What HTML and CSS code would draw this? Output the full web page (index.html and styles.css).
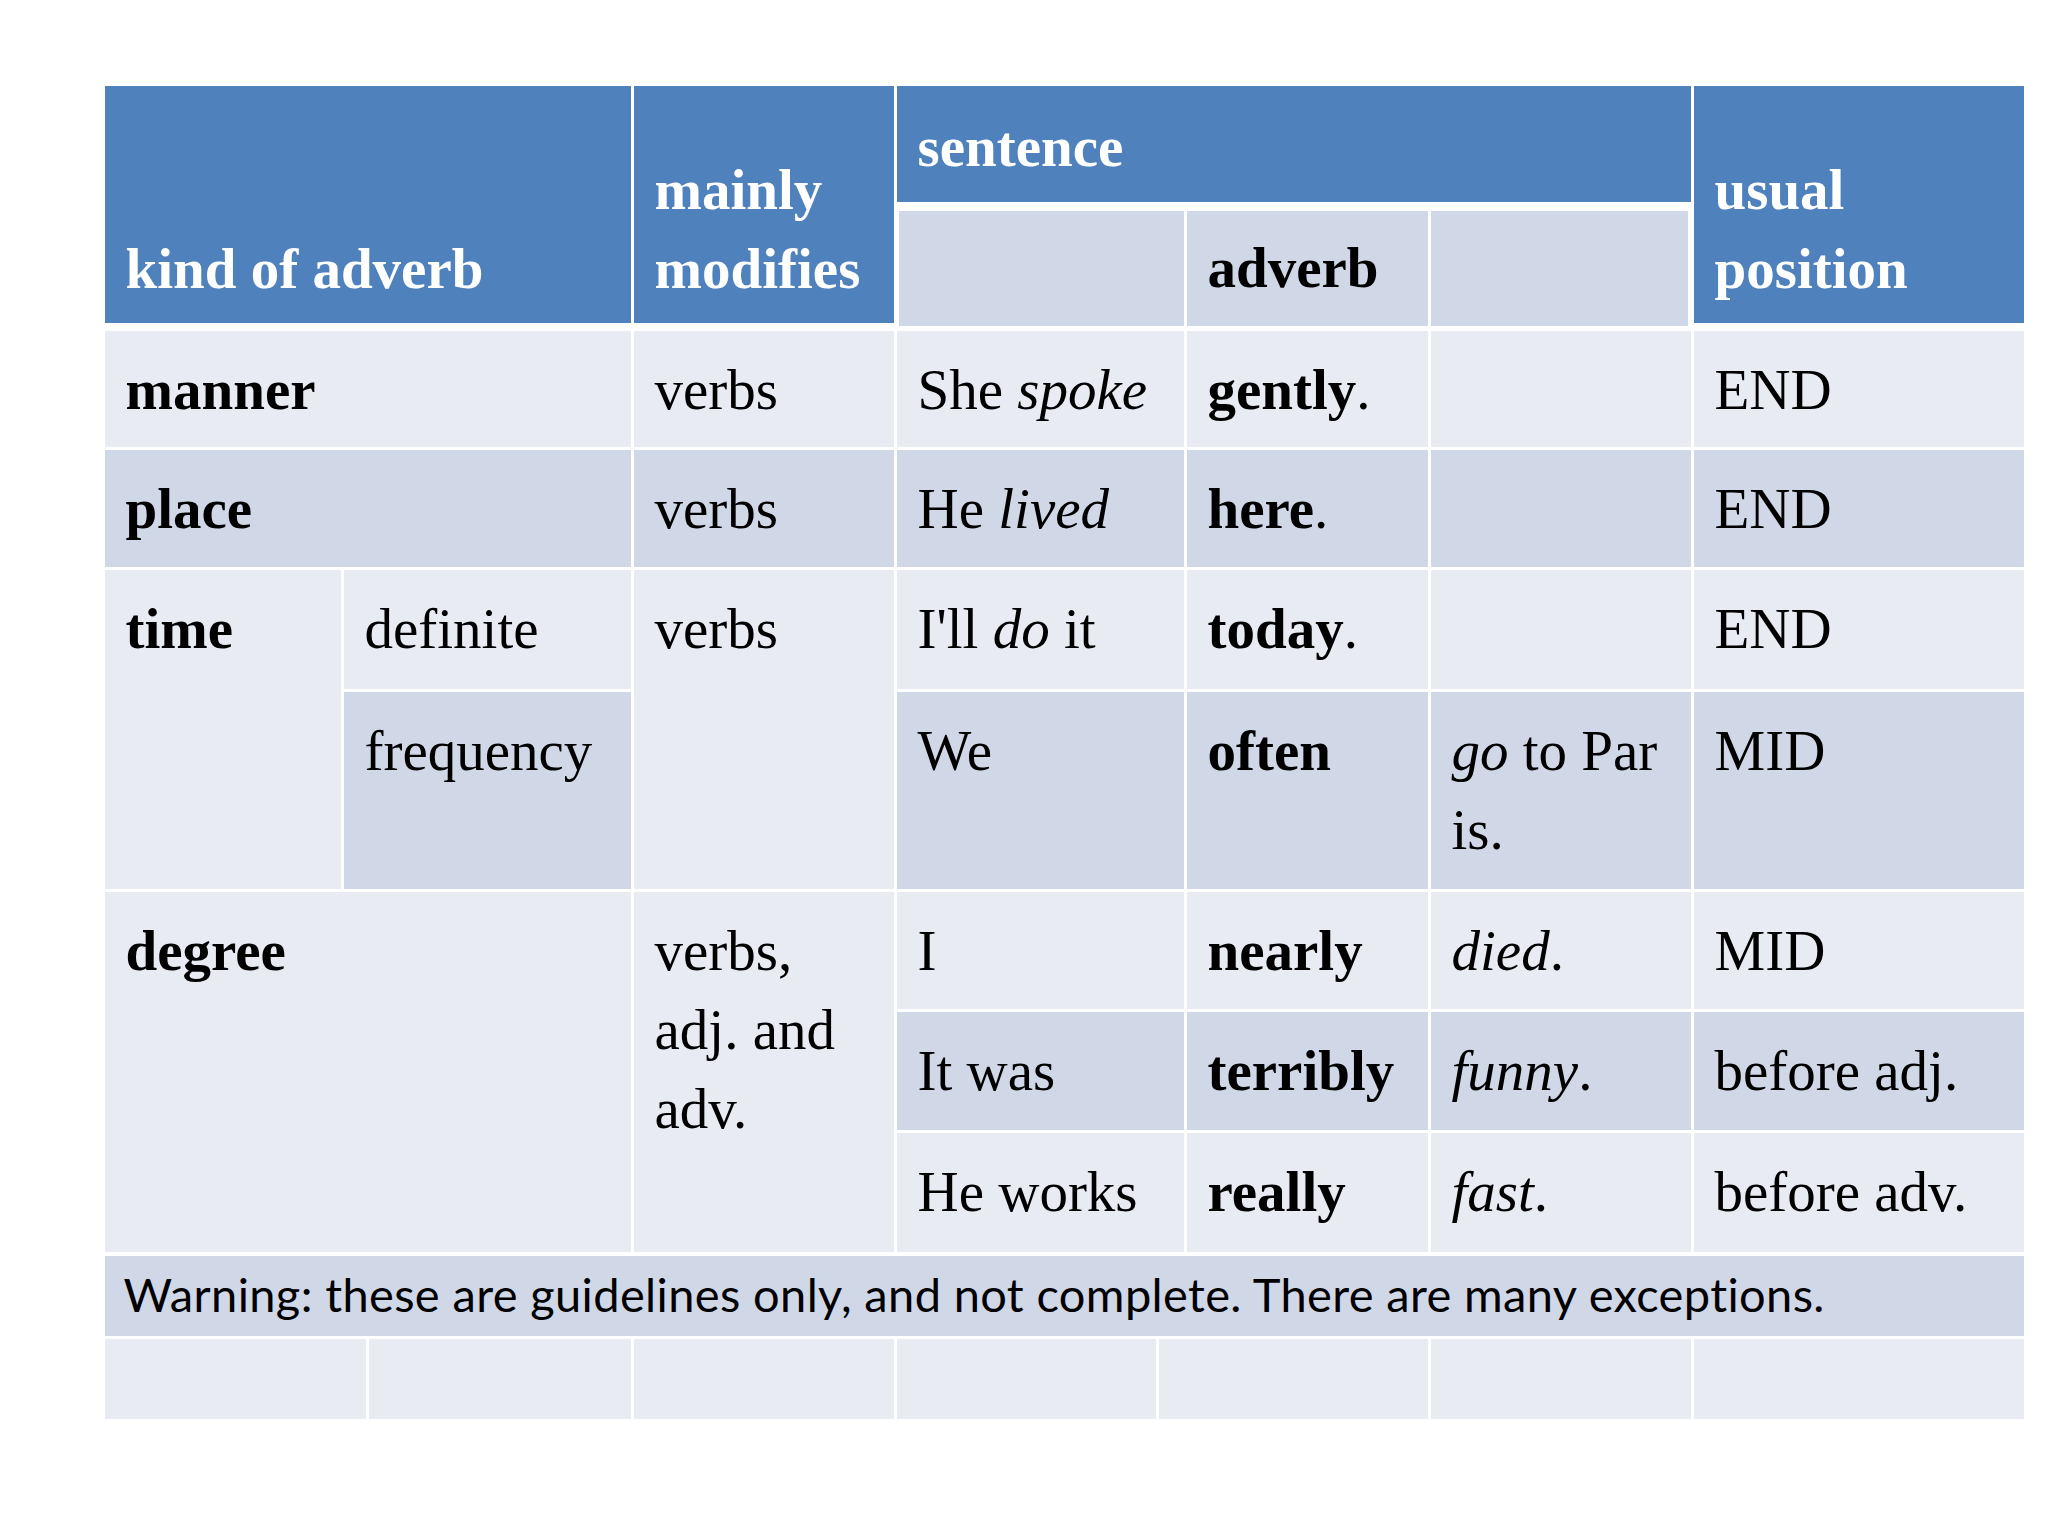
FILE: index.html
```html
<!DOCTYPE html>
<html lang="en">
<head>
<meta charset="utf-8">
<title>Kinds of adverb</title>
<link rel="stylesheet" href="styles.css">
</head>
<body>
<div class="slide">
  <div class="table">
    <div class="grid head">
      <div class="hd cs2 rs2">kind of adverb</div>
      <div class="hd rs2">mainly<br>modifies</div>
      <div class="hd top cs3">sentence</div>
      <div class="hd rs2">usual<br>position</div>
      <div class="sub first"></div>
      <div class="sub"><b>adverb</b></div>
      <div class="sub last"></div>
    </div>

    <div class="grid body">
      <div class="cell light cs2"><b>manner</b></div>
      <div class="cell light">verbs</div>
      <div class="cell light">She <i>spoke</i></div>
      <div class="cell light"><b>gently</b>.</div>
      <div class="cell light"></div>
      <div class="cell light">END</div>

      <div class="cell dark cs2"><b>place</b></div>
      <div class="cell dark">verbs</div>
      <div class="cell dark">He <i>lived</i></div>
      <div class="cell dark"><b>here</b>.</div>
      <div class="cell dark"></div>
      <div class="cell dark">END</div>

      <div class="cell light rs2"><b>time</b></div>
      <div class="cell light">definite</div>
      <div class="cell light rs2">verbs</div>
      <div class="cell light">I'll <i>do</i> it</div>
      <div class="cell light"><b>today</b>.</div>
      <div class="cell light"></div>
      <div class="cell light">END</div>

      <div class="cell dark">frequency</div>
      <div class="cell dark">We</div>
      <div class="cell dark"><b>often</b></div>
      <div class="cell dark"><i>go</i> to Par<br>is.</div>
      <div class="cell dark">MID</div>

      <div class="cell light cs2 rs3"><b>degree</b></div>
      <div class="cell light rs3">verbs,<br>adj. and<br>adv.</div>
      <div class="cell light">I</div>
      <div class="cell light"><b>nearly</b></div>
      <div class="cell light"><i>died</i>.</div>
      <div class="cell light">MID</div>

      <div class="cell dark">It was</div>
      <div class="cell dark"><b>terribly</b></div>
      <div class="cell dark"><i>funny</i>.</div>
      <div class="cell dark">before adj.</div>

      <div class="cell light">He works</div>
      <div class="cell light"><b>really</b></div>
      <div class="cell light"><i>fast</i>.</div>
      <div class="cell light">before adv.</div>
    </div>

    <div class="warn dark">Warning: these are guidelines only, and not complete. There are many exceptions.</div>

    <div class="grid foot">
      <div class="light"></div>
      <div class="light"></div>
      <div class="light"></div>
      <div class="light"></div>
      <div class="light"></div>
      <div class="light"></div>
      <div class="light"></div>
    </div>
  </div>
</div>
</body>
</html>
```

FILE: styles.css
```css
* {
  box-sizing: border-box;
}

html,
body {
  margin: 0;
  padding: 0;
  background: #ffffff;
}

body {
  font-family: "Liberation Serif", "Times New Roman", serif;
  font-size: 57px;
  line-height: 79px;
  color: #000000;
}

.slide {
  width: 2048px;
  height: 1536px;
  padding: 86px 0 0 104.5px;
}

.table {
  width: 1919px;
  display: flex;
  flex-direction: column;
}

.grid {
  display: grid;
  grid-template-columns: 236px 287px 260px 287px 241px 260px 330px;
  column-gap: 3px;
  row-gap: 3px;
}

.head {
  grid-template-rows: 115.7px 118px;
}

.body {
  margin-top: 8.3px;
  grid-template-rows: 116px 117.5px 118.5px 197px 117px 118.5px 118.5px;
}

.foot {
  margin-top: 3px;
  height: 80px;
  grid-template-columns: 261px 262px 260px 259px 269px 260px 330px;
}

.cs2 {
  grid-column: span 2;
}

.cs3 {
  grid-column: span 3;
}

.rs2 {
  grid-row: span 2;
}

.rs3 {
  grid-row: span 3;
}

.light {
  background: #e9ebf3;
}

.dark {
  background: #d0d8e8;
}

.hd {
  background: #4f81bd;
  color: #ffffff;
  font-weight: bold;
  display: flex;
  flex-direction: column;
  justify-content: flex-end;
  padding: 0 21px 15px;
  white-space: nowrap;
}

.hd.top {
  justify-content: flex-start;
  padding: 21.3px 21px 0;
}

.sub {
  background: #d0d8e8;
  margin: 6px 0 -3px;
  display: flex;
  flex-direction: column;
  justify-content: flex-end;
  padding: 0 21px 19px;
}

.sub.first {
  margin-left: 2.5px;
}

.sub.last {
  margin-right: 2.5px;
}

.cell {
  padding: 19px 21px 0;
  white-space: nowrap;
}

.cell i {
  font-family: "Liberation Serif", "Times New Roman", serif;
  font-style: italic;
}

.warn {
  margin-top: 4px;
  height: 80px;
  padding: 0 19px;
  font-family: Lato, "Open Sans", sans-serif;
  font-size: 47px;
  line-height: 77px;
  letter-spacing: 0.36px;
  white-space: nowrap;
}
```
